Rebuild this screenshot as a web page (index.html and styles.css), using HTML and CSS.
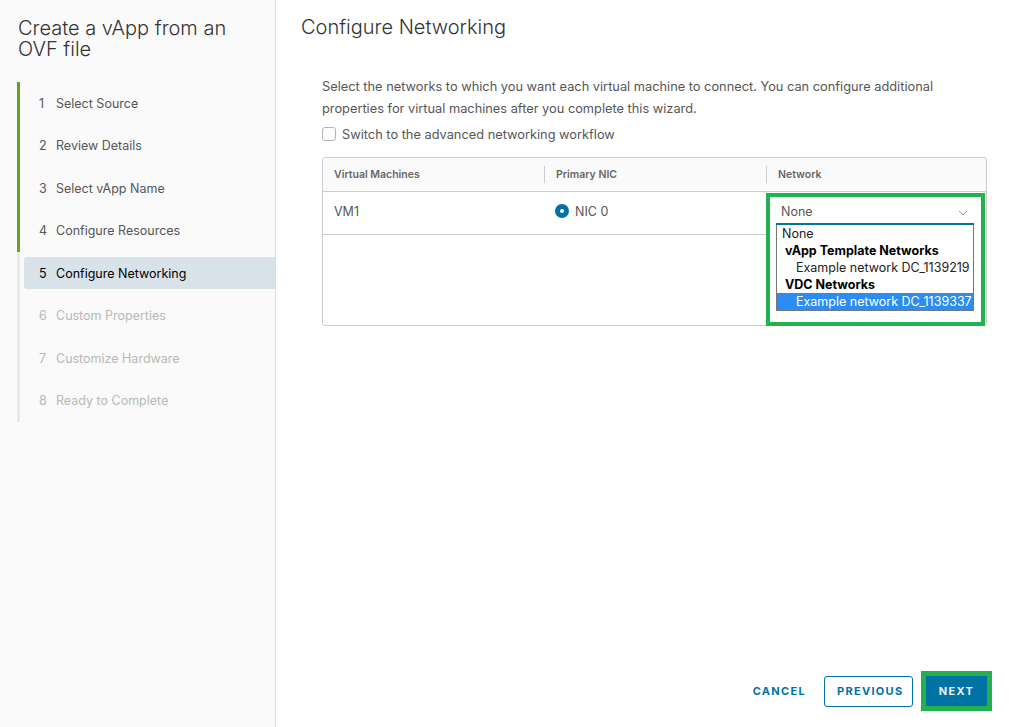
FILE: index.html
```html
<!DOCTYPE html>
<html lang="en">

<head>
    <meta charset="UTF-8">
    <meta name="viewport" content="width=device-width, initial-scale=1.0">
    <title>Create a vApp from an OVF file</title>
    <link rel="stylesheet" href="styles.css">
</head>

<body>
    <div class="wizard">
        <aside class="sidebar">
            <h1 class="wizard-title">Create a vApp from an OVF file</h1>
            <ol class="steps">
                <li class="step done"><span class="step-label"><span class="num">1</span>Select Source</span></li>
                <li class="step done"><span class="step-label"><span class="num">2</span>Review Details</span></li>
                <li class="step done"><span class="step-label"><span class="num">3</span>Select vApp Name</span></li>
                <li class="step done"><span class="step-label"><span class="num">4</span>Configure Resources</span></li>
                <li class="step current"><span class="step-label"><span class="num">5</span>Configure Networking</span></li>
                <li class="step todo"><span class="step-label"><span class="num">6</span>Custom Properties</span></li>
                <li class="step todo"><span class="step-label"><span class="num">7</span>Customize Hardware</span></li>
                <li class="step todo"><span class="step-label"><span class="num">8</span>Ready to Complete</span></li>
            </ol>
        </aside>

        <main class="content">
            <h2 class="page-title">Configure Networking</h2>

            <div class="body">
                <p class="intro">Select the networks to which you want each virtual machine to connect. You can configure additional properties for virtual machines after you complete this wizard.</p>

                <label class="checkbox">
                    <span class="box"></span>
                    Switch to the advanced networking workflow
                </label>

                <div class="grid">
                    <div class="head">
                        <div class="th">Virtual Machines</div>
                        <div class="th">Primary NIC</div>
                        <div class="th">Network</div>
                    </div>
                    <div class="rows">
                        <div class="row">
                            <div class="td">VM1</div>
                            <div class="td">
                                <span class="radio"></span>NIC 0
                            </div>
                        </div>
                        <div class="network-cell">
                            <div class="select">
                                <span>None</span>
                                <svg class="chevron" width="10" height="6" viewBox="0 0 10 6">
                                    <path d="M1 1 L5 5 L9 1" fill="none" stroke="#9a9a9a" stroke-width="1"/>
                                </svg>
                            </div>
                            <ul class="listbox">
                                <li class="opt">None</li>
                                <li class="group">vApp Template Networks</li>
                                <li class="opt sub">Example network DC_1139219</li>
                                <li class="group">VDC Networks</li>
                                <li class="opt sub selected">Example network DC_1139337</li>
                            </ul>
                        </div>
                    </div>
                </div>
            </div>

            <div class="footer">
                <button class="btn btn-link">Cancel</button>
                <button class="btn btn-outline">Previous</button>
                <span class="mark"><button class="btn btn-primary">Next</button></span>
            </div>
        </main>
    </div>
</body>

</html>
```

FILE: styles.css
```css
* {
    box-sizing: border-box;
}

body {
    margin: 0;
    font-family: Inter, Lato, sans-serif;
    color: #565656;
    background: #fff;
}

.wizard {
    display: flex;
    height: 727px;
}

.sidebar {
    width: 276px;
    flex-shrink: 0;
    background: #fafafa;
    border-right: 1px solid #dddddd;
    padding: 18px 0 0 17px;
}

.wizard-title {
    margin: 0 0 0 1px;
    font-size: 20px;
    font-weight: 300;
    line-height: 21px;
    color: #333;
    width: 240px;
}

.steps {
    list-style: none;
    margin: 22px 0 0 0;
    padding: 0;
}

.step {
    border-left: 3px solid #e8e8e8;
    padding: 5.25px 0;
}

.step.done {
    border-left-color: #62a420;
}

.step-label {
    display: flex;
    align-items: center;
    height: 32px;
    margin-left: 4px;
    padding-left: 15px;
    font-size: 12.5px;
    border-radius: 3px 0 0 3px;
}

.num {
    width: 17px;
}

.step.current .step-label {
    background: #d8e3e9;
    color: #000;
}

.step.todo .step-label {
    color: #b8b8b8;
}

.content {
    flex: 1;
    display: flex;
    flex-direction: column;
    padding: 14px 38px 16px 25px;
}

.page-title {
    margin: 0;
    font-size: 20px;
    font-weight: 300;
    line-height: 26px;
    color: #333;
}

.body {
    padding: 36px 5px 0 21px;
    flex: 1;
}

.intro {
    margin: 0;
    max-width: 640px;
    font-size: 12.8px;
    line-height: 22px;
}

.checkbox {
    display: flex;
    align-items: center;
    gap: 6px;
    font-size: 12.8px;
    margin-top: 5px;
    height: 18px;
}

.box {
    width: 14px;
    height: 14px;
    border: 1px solid #b3b3b3;
    border-radius: 3px;
    background: #fff;
}

.grid {
    margin-top: 14px;
    border: 1px solid #cccccc;
    border-radius: 3px;
    height: 169px;
    display: flex;
    flex-direction: column;
}

.head {
    display: grid;
    grid-template-columns: 221px 222px 1fr;
    height: 34px;
    background: #fafafa;
    border-bottom: 1px solid #cccccc;
    border-radius: 3px 3px 0 0;
}

.th {
    display: flex;
    align-items: center;
    padding-left: 11px;
    font-size: 10.5px;
    font-weight: 600;
    color: #666;
    border-left: 1px solid #ccc;
    margin: 8px 0;
}

.th:first-child {
    border-left: none;
    padding-left: 11px;
}

.rows {
    flex: 1;
    display: flex;
}

.row {
    display: grid;
    grid-template-columns: 221px 222px;
    height: 43px;
    border-bottom: 1px solid #cccccc;
}

.td {
    display: flex;
    align-items: center;
    padding-left: 11px;
    font-size: 12.5px;
    padding-bottom: 4px;
}

.td:nth-child(2) {
    padding-left: 11px;
}

.radio {
    width: 14px;
    height: 14px;
    border-radius: 50%;
    background: #fff;
    border: 5px solid #0072a3;
    margin-right: 6px;
}

.network-cell {
    flex: 1;
    position: relative;
    border: 4px solid #22b14c;
    margin: 1px 1px -1px 0;
    padding: 3px 7px 0 6px;
}

.select {
    display: flex;
    align-items: center;
    justify-content: space-between;
    height: 25px;
    padding: 0 6px 0 5px;
    border-bottom: 2px solid #0072a3;
    font-size: 12.5px;
}

.chevron {
    margin-top: 2px;
}

.listbox {
    list-style: none;
    margin: 0;
    padding: 0;
    border: 1px solid #767676;
    border-top: none;
    background: #fff;
    font-size: 12.5px;
    color: #222;
}

.listbox li {
    height: 17px;
    line-height: 17px;
    white-space: nowrap;
}

.opt {
    padding-left: 5px;
}

.opt.sub {
    padding-left: 19px;
}

.group {
    font-weight: 700;
    padding-left: 8px;
    color: #000;
}

.opt.selected {
    background: #2b8df2;
    color: #fff;
}

.footer {
    display: flex;
    justify-content: flex-end;
    align-items: center;
    gap: 6px;
}

.btn {
    font-family: inherit;
    font-size: 11px;
    font-weight: 700;
    letter-spacing: 1.3px;
    text-transform: uppercase;
    height: 31px;
    padding: 0 12px;
    border-radius: 3px;
    cursor: pointer;
}

.btn-link {
    background: none;
    border: none;
    color: #0072a3;
}

.btn-outline {
    background: #fff;
    border: 1px solid #0072a3;
    color: #0072a3;
    padding: 0 12px;
    width: 89px;
}

.mark {
    display: flex;
    border: 5px solid #22b14c;
    margin-left: 2px;
}

.btn-primary {
    background: #0072a3;
    border: none;
    border-radius: 0;
    color: #eaf3f8;
    width: 61px;
    height: 30px;
}
```
